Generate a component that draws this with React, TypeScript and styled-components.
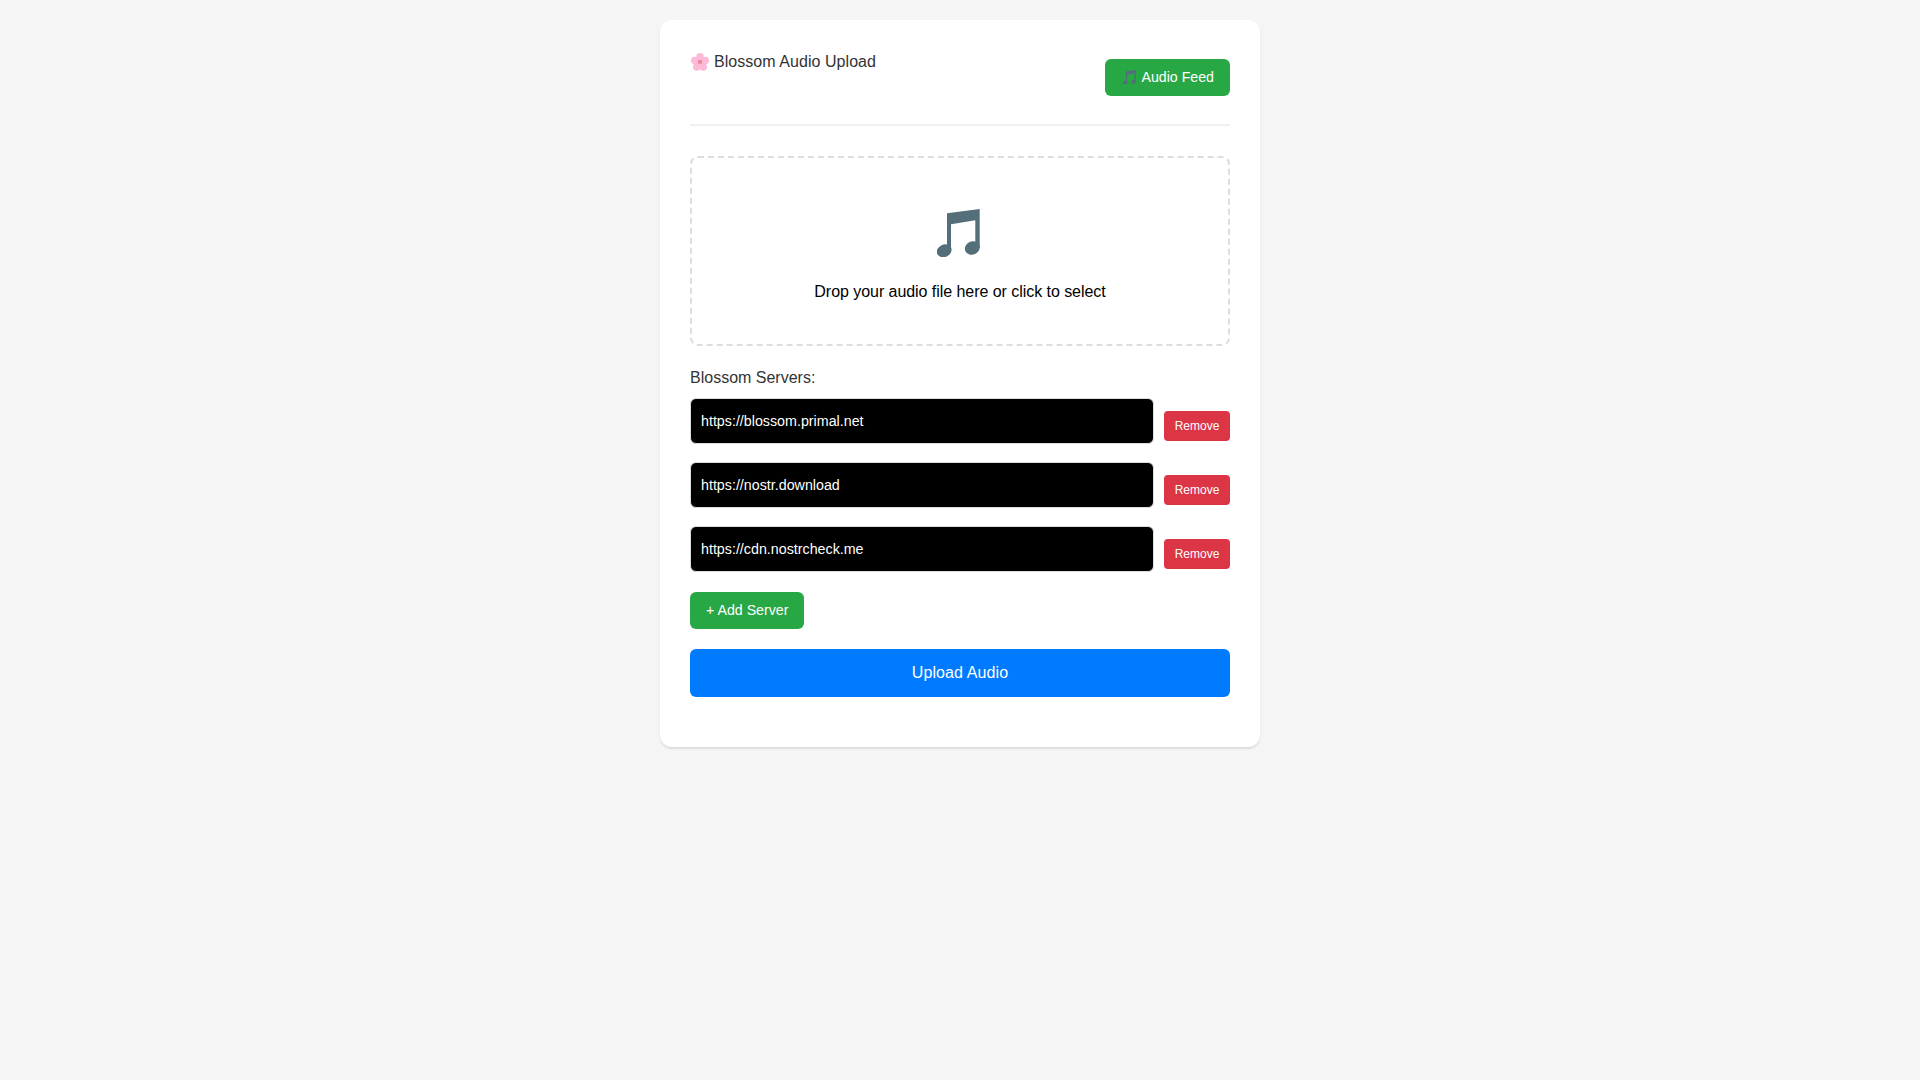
import React from 'react';
import styled, { createGlobalStyle } from 'styled-components';

const GlobalStyle = createGlobalStyle`
  html, body {
    margin: 0;
    padding: 0;
    background: #f5f5f5;
    font-family: "Liberation Sans", Arial, sans-serif;
  }
`;

const Page = styled.div`
  min-height: 1080px;
  padding-top: 20px;
  box-sizing: border-box;
`;

const Card = styled.main`
  width: 600px;
  box-sizing: border-box;
  margin: 0 auto;
  padding: 30px 30px 50px;
  background: #fff;
  border-radius: 12px;
  box-shadow: 0 2px 2px rgba(0, 0, 0, 0.1);
`;

const Header = styled.header`
  display: flex;
  justify-content: space-between;
  align-items: flex-start;
  padding-bottom: 28px;
  margin-bottom: 30px;
  border-bottom: 2px solid #f0f0f0;
`;

const Title = styled.h1`
  display: flex;
  align-items: center;
  gap: 5px;
  margin: 3px 0 0 1px;
  font-size: 16px;
  line-height: 18px;
  font-weight: 400;
  letter-spacing: 0.05px;
  color: #333;
`;

const Button = styled.button<{ $tone: 'green' | 'blue' | 'red' }>`
  border: none;
  color: #fff;
  font-family: inherit;
  cursor: pointer;
  background: ${(p) =>
    p.$tone === 'green' ? '#28a745' : p.$tone === 'blue' ? '#007bff' : '#dc3545'};
`;

const FeedButton = styled(Button)`
  display: flex;
  align-items: center;
  gap: 5px;
  height: 37px;
  margin-top: 9px;
  padding: 0 16px 1px 18px;
  font-size: 14.2px;
  border-radius: 6px;
`;

const DropZone = styled.div`
  height: 190px;
  box-sizing: border-box;
  padding-top: 51px;
  margin-bottom: 23px;
  border: 2px dashed #ddd;
  border-radius: 8px;
  text-align: center;
  cursor: pointer;
`;

const DropIcon = styled.div`
  height: 48px;
  margin-bottom: 26px;
  padding-right: 4px;
`;

const DropText = styled.p`
  margin: 0;
  font-size: 16px;
  line-height: 18px;
  letter-spacing: -0.05px;
  color: #000;
`;

const ServersLabel = styled.label`
  display: block;
  margin-bottom: 11px;
  font-size: 16px;
  line-height: 18px;
  color: #333;
`;

const ServerList = styled.div`
  display: flex;
  flex-direction: column;
  gap: 18px;
  margin-bottom: 20px;
`;

const ServerRow = styled.div`
  display: flex;
  gap: 10px;
`;

const ServerInput = styled.input`
  flex: 1;
  min-width: 0;
  height: 46px;
  box-sizing: border-box;
  padding: 0 10px;
  background: #000;
  color: #fff;
  border: 1px solid #ddd;
  border-radius: 6px;
  font-family: inherit;
  font-size: 14.27px;
`;

const RemoveButton = styled(Button)`
  width: 66px;
  height: 30px;
  margin-top: 13px;
  font-size: 12px;
  border-radius: 4px;
`;

const AddButton = styled(Button)`
  display: block;
  height: 37px;
  padding: 0 16px 1px;
  margin-bottom: 20px;
  font-size: 14.2px;
  border-radius: 6px;
`;

const UploadButton = styled(Button)`
  display: block;
  width: 100%;
  height: 48px;
  font-size: 16px;
  letter-spacing: 0.1px;
  border-radius: 6px;
`;

const MusicNote = ({ size }: { size: number }) => (
  <svg width={size} height={(size * 48) / 43} viewBox="0 0 43 48" fill="#546e7a" aria-hidden="true">
    <path d="M10 4.3 42.7 0V39h-4.4V11.3L14 15.3V43h-4z" />
    <ellipse cx="35.3" cy="39" rx="7.6" ry="6.6" transform="rotate(-25 35.3 39)" />
    <ellipse cx="7.2" cy="41.8" rx="7.6" ry="6.2" transform="rotate(-25 7.2 41.8)" />
  </svg>
);

const BlossomIcon = () => (
  <svg width="18" height="18" viewBox="0 0 36 36" aria-hidden="true">
    <g fill="#fdb9d6">
      <circle cx="18" cy="7.5" r="7.5" />
      <circle cx="28.5" cy="15" r="7.5" />
      <circle cx="24.5" cy="28" r="7.5" />
      <circle cx="11.5" cy="28" r="7.5" />
      <circle cx="7.5" cy="15" r="7.5" />
      <circle cx="18" cy="18" r="8" />
    </g>
    <path d="M18 14v8M14 18h8M15 15l6 6M21 15l-6 6" stroke="#e0517f" strokeWidth="1.6" />
    <circle cx="18" cy="19" r="1.6" fill="#f7c948" />
  </svg>
);

const servers = ['https://blossom.primal.net', 'https://nostr.download', 'https://cdn.nostrcheck.me'];

export default function App() {
  return (
    <Page>
      <GlobalStyle />
      <Card>
        <Header>
          <Title>
            <BlossomIcon />
            Blossom Audio Upload
          </Title>
          <FeedButton $tone="green">
            <MusicNote size={13} />
            Audio Feed
          </FeedButton>
        </Header>
        <DropZone>
          <DropIcon>
            <MusicNote size={43} />
          </DropIcon>
          <DropText>Drop your audio file here or click to select</DropText>
        </DropZone>
        <ServersLabel>Blossom Servers:</ServersLabel>
        <ServerList>
          {servers.map((url) => (
            <ServerRow key={url}>
              <ServerInput type="text" defaultValue={url} />
              <RemoveButton $tone="red">Remove</RemoveButton>
            </ServerRow>
          ))}
        </ServerList>
        <AddButton $tone="green">+ Add Server</AddButton>
        <UploadButton $tone="blue">Upload Audio</UploadButton>
      </Card>
    </Page>
  );
}
